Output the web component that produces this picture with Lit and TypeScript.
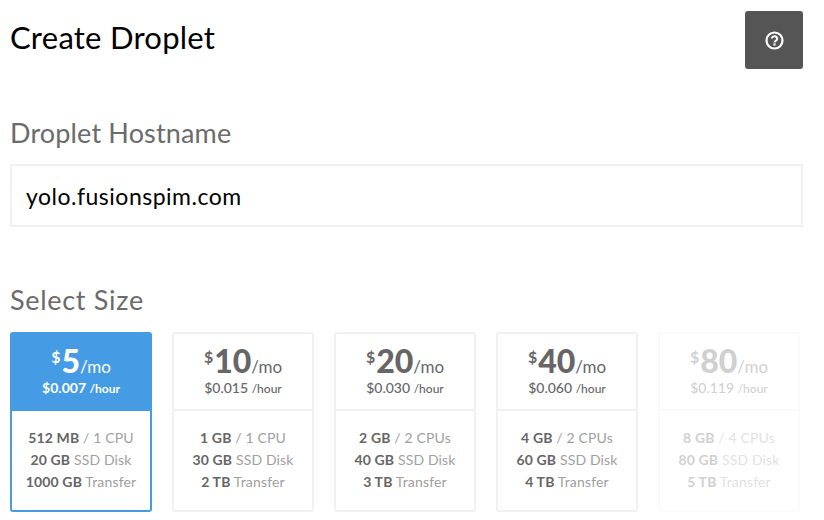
import { LitElement, html, css } from 'lit';
import { customElement } from 'lit/decorators.js';

const plans = [
    { price: '5', hour: '$0.007', mem: '512 MB', cpu: '1 CPU', disk: '20 GB', transfer: '1000 GB', state: 'active' },
    { price: '10', hour: '$0.015', mem: '1 GB', cpu: '1 CPU', disk: '30 GB', transfer: '2 TB', state: '' },
    { price: '20', hour: '$0.030', mem: '2 GB', cpu: '2 CPUs', disk: '40 GB', transfer: '3 TB', state: '' },
    { price: '40', hour: '$0.060', mem: '4 GB', cpu: '2 CPUs', disk: '60 GB', transfer: '4 TB', state: '' },
    { price: '80', hour: '$0.119', mem: '8 GB', cpu: '4 CPUs', disk: '80 GB', transfer: '5 TB', state: 'disabled' },
];

@customElement('app-root')
export class AppRoot extends LitElement {
    static styles = css`
        :host {
            display: block;
            width: 824px;
            height: 520px;
            overflow: hidden;
            background: #fff;
            font-family: Lato, "Liberation Sans", sans-serif;
            color: #666;
        }
        .page {
            padding: 11px 21px 0 10px;
        }
        .top {
            display: flex;
            justify-content: space-between;
            align-items: flex-start;
        }
        h1 {
            margin: 0;
            font-size: 31px;
            line-height: 52px;
            font-weight: 400;
            color: #000;
            letter-spacing: 0.25px;
        }
        .help {
            width: 58px;
            height: 58px;
            border-radius: 3px;
            background: #555;
            display: flex;
            align-items: center;
            justify-content: center;
        }
        h2 {
            margin: 0;
            font-size: 27px;
            line-height: 32px;
            font-weight: 400;
            color: #6b6b6b;
            letter-spacing: 0.15px;
        }
        .hostname-label {
            margin-top: 48px;
        }
        .hostname {
            margin-top: 15px;
            height: 63px;
            box-sizing: border-box;
            border: 2px solid #f1f1f1;
            padding: 0 14px;
            display: flex;
            align-items: center;
            font-size: 23px;
            color: #000;
            letter-spacing: 0.5px;
        }
        .size-label {
            margin-top: 57px;
            letter-spacing: 0.7px;
        }
        .sizes {
            margin-top: 16px;
            display: grid;
            grid-template-columns: repeat(5, 142px);
            gap: 20px;
        }
        .card {
            height: 180px;
            box-sizing: border-box;
            border: 2px solid #f1f1f1;
            border-radius: 3px;
            text-align: center;
            display: flex;
            flex-direction: column;
        }
        .head {
            height: 75px;
            border-bottom: 2px solid #f1f1f1;
        }
        .price {
            margin-top: 10px;
            height: 34px;
            line-height: 34px;
            font-size: 17px;
            white-space: nowrap;
        }
        .price sup {
            font-size: 16px;
            font-weight: 700;
            line-height: 0;
            position: relative;
            top: -10px;
            vertical-align: baseline;
            margin-right: 1px;
        }
        .price b {
            font-size: 32px;
            font-weight: 900;
        }
        .hour {
            font-size: 14px;
            line-height: 20px;
            font-weight: 500;
        }
        .hour small {
            font-size: 12px;
        }
        .specs {
            padding-top: 16px;
            font-size: 14px;
            line-height: 22px;
            color: #a0a0a0;
            letter-spacing: 0.15px;
        }
        .specs b {
            color: #666;
            font-weight: 700;
        }
        .active {
            border-color: #459ce5;
        }
        .active .head {
            background: #459ce5;
            border-bottom-color: #459ce5;
            color: #fff;
        }
        .active .hour {
            font-weight: 700;
        }
        .disabled {
            opacity: 0.3;
        }
    `;

    render() {
        return html`
        <div class="page">
            <div class="top">
                <h1>Create Droplet</h1>
                <div class="help">
                    <svg width="19" height="19" viewBox="0 0 19 19" fill="none">
                        <circle cx="9.5" cy="9.5" r="8" stroke="#fff" stroke-width="2.2"></circle>
                        <path d="M6.8 7.6a2.7 2.4 0 1 1 4.2 2c-1 .6-1.5 1-1.5 1.9" stroke="#fff" stroke-width="2"></path>
                        <rect x="8.4" y="12.4" width="2.2" height="2.1" fill="#fff"></rect>
                    </svg>
                </div>
            </div>
            <h2 class="hostname-label">Droplet Hostname</h2>
            <div class="hostname">yolo.fusionspim.com</div>
            <h2 class="size-label">Select Size</h2>
            <div class="sizes">
                ${plans.map(p => html`
                <div class="card ${p.state}">
                    <div class="head">
                        <div class="price"><sup>$</sup><b>${p.price}</b>/mo</div>
                        <div class="hour">${p.hour} <small>/hour</small></div>
                    </div>
                    <div class="specs">
                        <div><b>${p.mem}</b> / ${p.cpu}</div>
                        <div><b>${p.disk}</b> SSD Disk</div>
                        <div><b>${p.transfer}</b> Transfer</div>
                    </div>
                </div>
                `)}
            </div>
        </div>
        `;
    }
}

declare global {
    interface HTMLElementTagNameMap {
        'app-root': AppRoot;
    }
}
